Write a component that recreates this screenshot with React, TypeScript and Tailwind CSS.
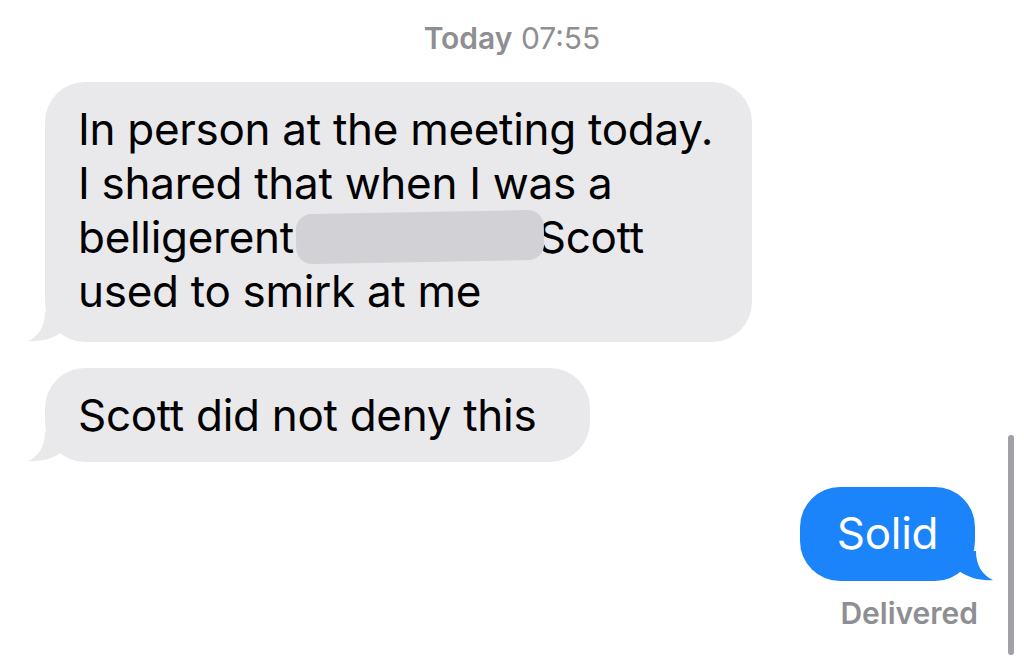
import React from 'react';

const font = { fontFamily: 'Inter, "Liberation Sans", sans-serif' };

const LeftTail = () => (
  <svg className="absolute left-[-17px] bottom-0" width="44" height="30" viewBox="0 0 44 30">
    <path d="M17 0 C17 14 11 24 0 29 C12 30 24 27 34 20 L44 20 L44 0 Z" fill="#e9e9eb" />
  </svg>
);

const RightTail = () => (
  <svg className="absolute right-[-18px] bottom-0" width="44" height="30" viewBox="0 0 44 30">
    <path d="M27 0 C27 14 33 24 44 29 C32 30 20 27 10 20 L0 20 L0 0 Z" fill="#1b84fb" />
  </svg>
);

const App: React.FC = () => {
  return (
    <div className="w-[1024px] h-[664px] bg-white relative overflow-hidden" style={font}>
      {/* Timestamp */}
      <div className="pt-[20px] text-center text-[30px] leading-[36px] text-[#8e8e93]">
        <span className="font-semibold">Today</span> <span>07:55</span>
      </div>

      {/* Incoming messages */}
      <div className="pl-[45px] pt-[26px] flex flex-col gap-[26px] items-start">
        <div className="relative w-[707px] h-[260px] bg-[#e9e9eb] rounded-[40px] px-[33px] pt-[20px] text-[44px] leading-[54px] tracking-[-0.3px] text-black">
          <LeftTail />
          <div className="relative">
            In person at the meeting today.
            <br />
            I shared that when I was a
            <br />
            belligerent
            <span className="inline-block relative w-[244px] h-[40px] align-middle">
              <span className="absolute left-[2px] top-[-9px] w-[248px] h-[50px] bg-[#d1d1d6] rounded-[16px] -rotate-1"></span>
            </span>
            Scott
            <br />
            used to smirk at me
          </div>
        </div>

        <div className="relative w-[545px] h-[94px] bg-[#e9e9eb] rounded-[40px] px-[33px] pt-[20px] text-[44px] leading-[54px] tracking-[-0.3px] text-black">
          <LeftTail />
          <div className="relative">Scott did not deny this</div>
        </div>
      </div>

      {/* Outgoing message */}
      <div className="pr-[49px] pt-[25px] flex flex-col items-end">
        <div className="relative w-[175px] h-[94px] bg-[#1b84fb] rounded-[40px] flex items-center justify-center text-[44px] leading-[54px] tracking-[-0.3px] text-white">
          <RightTail />
          <div className="relative pb-[2px]">Solid</div>
        </div>
        <div className="pt-[14px] mr-[-3px] text-[30px] leading-[36px] font-semibold text-[#8e8e93]">Delivered</div>
      </div>

      {/* Scroll indicator */}
      <div className="absolute left-[1008px] top-[435px] w-[6px] h-[220px] rounded-full bg-[#a1a1a6]"></div>
    </div>
  );
};

export default App;
